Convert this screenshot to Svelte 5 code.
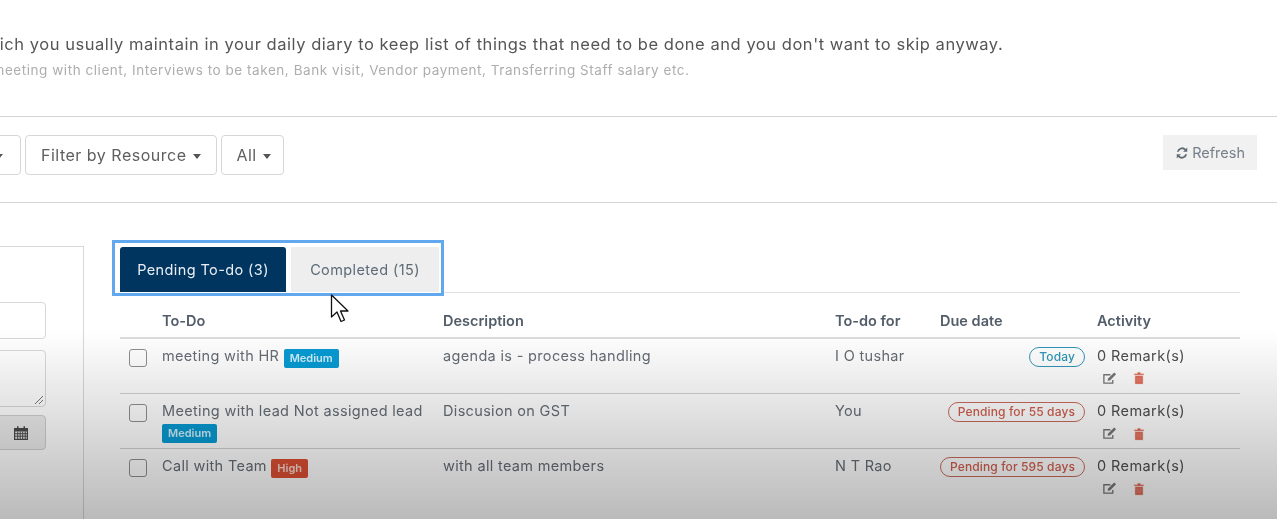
<script>
  const rows = [
    { title: 'meeting with HR', level: 'Medium', desc: 'agenda is - process handling', owner: 'I O tushar', due: 'Today', late: false },
    { title: 'Meeting with lead Not assigned lead', level: 'Medium', desc: 'Discusion on GST', owner: 'You', due: 'Pending for 55 days', late: true },
    { title: 'Call with Team', level: 'High', desc: 'with all team members', owner: 'N T Rao', due: 'Pending for 595 days', late: true },
  ]
</script>

<div class="page">
  <header class="intro">
    <p class="lead">To-do is a list of tasks which you usually maintain in your daily diary to keep list of things that need to be done and you don't want to skip anyway.</p>
    <p class="sub">For example meeting with client, Interviews to be taken, Bank visit, Vendor payment, Transferring Staff salary etc.</p>
  </header>

  <div class="toolbar">
    <button class="drop first">Filter by Status <i class="caret"></i></button>
    <button class="drop resource">Filter by Resource <i class="caret"></i></button>
    <button class="drop all">All <i class="caret"></i></button>
    <button class="refresh">
      <svg viewBox="0 0 16 16" width="14" height="14"><path d="M2.200 6.600A6 6 0 0 1 12.400 3.400L14 1.800V6.600H9.200L11 4.800A4 4 0 0 0 4.300 6.600ZM13.800 9.400A6 6 0 0 1 3.600 12.600L2 14.200V9.400H6.800L5 11.200A4 4 0 0 0 11.700 9.400Z" fill="#5f6b75"/></svg>
      Refresh
    </button>
  </div>

  <div class="content">
    <aside class="panel">
      <div class="field"></div>
      <div class="field area">
        <svg class="grip" viewBox="0 0 10 10" width="10" height="10"><path d="M1 9 9 1M5 9 9 5" stroke="#777" fill="none"/></svg>
      </div>
      <div class="date-row">
        <span class="cal">
          <svg viewBox="0 0 16 16" width="16" height="16"><path d="M1 3H4V1.200H5.500V3H10.500V1.200H12V3H15V15H1ZM2.200 6.500V13.800H13.800V6.500Z" fill="#4a4a4a" fill-rule="evenodd"/><path d="M2 8.700H14M2 11.200H14M4.700 6.500V14M7.200 6.500V14M9.700 6.500V14M12.200 6.500V14" stroke="#4a4a4a"/></svg>
        </span>
      </div>
    </aside>

    <section class="list">
      <div class="tabs">
        <button class="tab active">Pending To-do (3)</button>
        <button class="tab">Completed (15)</button>
      </div>
      <table>
        <colgroup>
          <col style="width:42px" /><col style="width:281px" /><col style="width:392px" /><col style="width:105px" /><col style="width:157px" /><col style="width:143px" />
        </colgroup>
        <thead>
          <tr><th></th><th>To-Do</th><th>Description</th><th>To-do for</th><th>Due date</th><th>Activity</th></tr>
        </thead>
        <tbody>
          {#each rows as row}
            <tr>
              <td class="check"><span class="box"></span></td>
              <td class="title">{row.title} <span class={row.level === 'High' ? 'tag high' : 'tag'}>{row.level}</span></td>
              <td>{row.desc}</td>
              <td>{row.owner}</td>
              <td class="due"><span class={row.late ? 'pill late' : 'pill'}>{row.due}</span></td>
              <td class="activity">
                <div class="remarks">0 Remark(s)</div>
                <div class="icons">
                  <svg viewBox="0 0 16 16" width="15" height="15"><path d="M11.500 9.500V13H2V4H9" stroke="#777" stroke-width="1.400" fill="none"/><path d="M6.500 8 13 1.500 15 3.500 8.500 10 6 10.500Z" fill="#777"/></svg>
                  <svg viewBox="0 0 16 16" width="14" height="14"><path d="M2.500 3H6L6.600 1.500H9.400L10 3H13.500V4.500H2.500ZM3.500 5.500H12.500V14.800H3.500ZM5.800 7V13.300M8 7V13.300M10.200 7V13.300" fill="#dd5a45" stroke="#f3c9c2" stroke-width=".6"/></svg>
                </div>
              </td>
            </tr>
          {/each}
        </tbody>
      </table>
    </section>
  </div>

  <div class="shade"></div>
  <svg class="cursor" viewBox="0 0 20 30" width="20" height="30"><path d="M1.500 1V23L7 18 11 27.500 14.500 26 10.500 17H18Z" fill="#fff" stroke="#111" stroke-width="1.300" stroke-linejoin="round"/></svg>
</div>

<style>
  :global(body) {
    margin: 0;
    background: #fff;
  }

  .page {
    position: relative;
    width: 1277px;
    height: 519px;
    overflow: hidden;
    background: #fff;
    color: #666d75;
    font-family: Inter, 'Noto Sans', sans-serif;
    font-size: 14.500px;
    letter-spacing: 0.33px;
    filter: blur(0.5px);
  }

  .intro {
    height: 117px;
    box-sizing: border-box;
    padding-top: 34px;
    margin-left: -214px;
    white-space: nowrap;
    border-bottom: 1px solid #d4d4d4;
  }

  .intro p {
    margin: 0;
  }

  .lead {
    font-size: 16.500px;
    line-height: 20px;
    letter-spacing: 0.54px;
    color: #555;
  }

  .intro .sub {
    margin: 7px 0 0 118px;
    font-size: 13.500px;
    line-height: 18px;
    letter-spacing: 0.55px;
    color: #aeaeae;
  }

  .toolbar {
    display: flex;
    align-items: flex-start;
    gap: 4px;
    height: 86px;
    box-sizing: border-box;
    padding: 18px 20px 0 0;
    margin-left: -160px;
    border-bottom: 1px solid #d4d4d4;
  }

  .drop {
    height: 40px;
    padding: 0 15px;
    border: 1px solid #d6d6d6;
    border-radius: 4px;
    background: #fff;
    color: #5e5e5e;
    font: inherit;
    font-size: 16px;
    letter-spacing: 0.5px;
    white-space: nowrap;
  }

  .drop.first {
    width: 181px;
    padding-right: 17px;
    text-align: right;
  }

  .drop.resource .caret {
    margin-left: 2px;
  }

  .drop.all {
    padding: 0 12px 0 14px;
  }

  .caret {
    display: inline-block;
    margin-left: 1px;
    vertical-align: middle;
    border-top: 5px solid #555;
    border-left: 4.500px solid transparent;
    border-right: 4.500px solid transparent;
  }

  .refresh {
    display: flex;
    align-items: center;
    gap: 3px;
    height: 35px;
    margin-left: auto;
    padding: 0 12px;
    border: 0;
    background: #f1f1f1;
    color: #77808a;
    font: inherit;
    font-size: 14.500px;
  }

  .content {
    display: flex;
    gap: 36px;
    padding-top: 37px;
  }

  .panel {
    flex: none;
    box-sizing: border-box;
    width: 184px;
    height: 400px;
    margin-left: -100px;
    margin-top: 6px;
    padding: 55px 37px 0 0;
    border: 1px solid #d8d8d8;
  }

  .field {
    height: 35px;
    border: 1px solid #d8d8d8;
    border-radius: 4px;
  }

  .field.area {
    position: relative;
    height: 55px;
    margin-top: 11px;
  }

  .grip {
    position: absolute;
    right: 1px;
    bottom: 1px;
  }

  .date-row {
    display: flex;
    justify-content: flex-end;
    margin-top: 8px;
  }

  .cal {
    display: flex;
    align-items: center;
    justify-content: center;
    width: 100%;
    height: 35px;
    box-sizing: border-box;
    padding-left: 95px;
    border: 1px solid #cfcfcf;
    border-radius: 4px;
    background: #ececec;
  }

  .list {
    width: 1120px;
    flex: none;
  }

  .tabs {
    position: relative;
    display: flex;
    gap: 5px;
    box-sizing: border-box;
    width: 332px;
    height: 56px;
    margin: 0 0 -4px -8px;
    padding: 4px 2px 1px 5px;
    border: 3px solid #62a8ef;
    background: #fff;
  }

  .tab {
    border: 0;
    font: inherit;
    font-size: 14.500px;
    letter-spacing: 0.4px;
    white-space: nowrap;
  }

  .tab.active {
    width: 166px;
    flex: none;
    border-radius: 3px 3px 0 0;
    background: #003560;
    color: #e8eef3;
  }

  .tab:not(.active) {
    flex: 1;
    background: #eeeeee;
    color: #5d6b78;
  }

  table {
    width: 1120px;
    table-layout: fixed;
    border-collapse: collapse;
    border-top: 1px solid #e2e2e2;
  }

  th {
    height: 45px;
    padding: 12px 0 0;
    box-sizing: border-box;
    text-align: left;
    font-size: 14.500px;
    font-weight: 600;
    letter-spacing: 0;
    color: #525d69;
    border-bottom: 2px solid #dcdcdc;
  }

  td {
    height: 55px;
    padding: 7px 0 0;
    vertical-align: top;
    box-sizing: border-box;
    line-height: 20px;
    border-bottom: 1px solid #d2d2d2;
  }

  tbody tr:first-child td {
    height: 56px;
  }

  tbody tr:last-child td {
    border-bottom: 0;
  }

  .check {
    padding-left: 9px;
  }

  .box {
    display: block;
    width: 16px;
    height: 16px;
    margin-top: 3px;
    border: 1px solid #8f8f8f;
    border-radius: 3px;
    background: #fff;
  }

  .title {
    padding-right: 12px;
  }

  .tag {
    display: inline-block;
    padding: 0 6px;
    border-radius: 2px;
    background: #079bd3;
    color: #cfeefa;
    font-size: 11px;
    font-weight: 600;
    letter-spacing: 0;
    line-height: 19px;
    vertical-align: -1px;
  }

  .tag.high {
    background: #dd4f33;
    color: #f8d8d0;
  }

  .due {
    padding-right: 12px;
    text-align: right;
  }

  .pill {
    display: inline-block;
    padding: 0 9px;
    border: 1px solid #2f96b8;
    border-radius: 11px;
    color: #2f96b8;
    font-size: 12px;
    font-weight: 500;
    letter-spacing: 0.12px;
    line-height: 18px;
    white-space: nowrap;
  }

  .pill.late {
    border-color: #c96a5c;
    color: #d05f4e;
  }

  .remarks {
    color: #4e4e4e;
    letter-spacing: 0.4px;
  }

  .icons {
    display: flex;
    align-items: center;
    gap: 15px;
    margin: 5px 0 0 5px;
  }

  .shade {
    position: absolute;
    inset: 330px 0 0;
    background: linear-gradient(to bottom, rgba(0, 0, 0, 0), rgba(0, 0, 0, 0.27));
    pointer-events: none;
  }

  .cursor {
    position: absolute;
    left: 330px;
    top: 294px;
  }
</style>
